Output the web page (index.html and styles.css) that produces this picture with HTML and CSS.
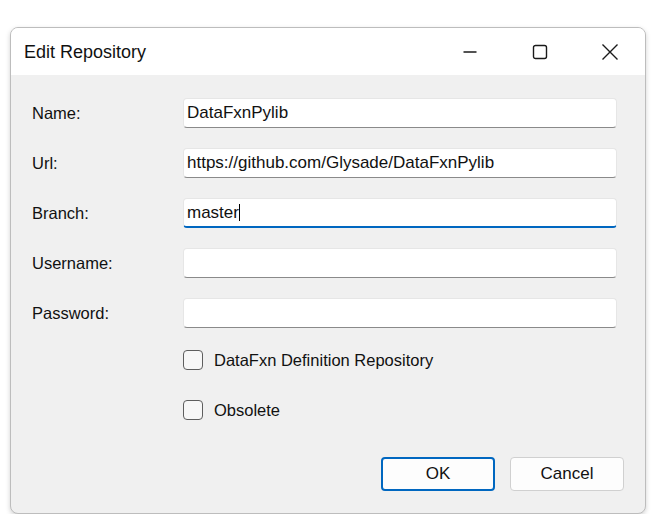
FILE: index.html
```html
<!DOCTYPE html>
<html lang="en">
	<head>
		<meta charset="UTF-8" />
		<meta name="viewport" content="width=device-width, initial-scale=1.0" />
		<title>Edit Repository</title>
		<link rel="stylesheet" href="styles.css">
	</head>
	<body>
		<div class="window">
			<div class="titlebar">
				<span class="title">Edit Repository</span>
				<div class="controls">
					<span class="ctl">
						<svg width="16" height="16" viewBox="0 0 16 16"><path d="M1.5 8h13" stroke="#1a1a1a" stroke-width="1.3" fill="none"/></svg>
					</span>
					<span class="ctl">
						<svg width="16" height="16" viewBox="0 0 16 16"><rect x="1.5" y="1.5" width="13" height="13" rx="2" stroke="#1a1a1a" stroke-width="1.4" fill="none"/></svg>
					</span>
					<span class="ctl">
						<svg width="18" height="18" viewBox="0 0 18 18"><path d="M1.5 1.5l15 15M16.5 1.5l-15 15" stroke="#1a1a1a" stroke-width="1.4" fill="none"/></svg>
					</span>
				</div>
			</div>

			<div class="content">
				<div class="form">
					<label class="lbl">Name:</label>
					<div class="field">DataFxnPylib</div>

					<label class="lbl">Url:</label>
					<div class="field">https://github.com/Glysade/DataFxnPylib</div>

					<label class="lbl">Branch:</label>
					<div class="field focused">master<span class="caret"></span></div>

					<label class="lbl">Username:</label>
					<div class="field"></div>

					<label class="lbl">Password:</label>
					<div class="field"></div>
				</div>

				<div class="checks">
					<div class="check"><span class="box"></span>DataFxn Definition Repository</div>
					<div class="check"><span class="box"></span>Obsolete</div>
				</div>

				<div class="buttons">
					<button class="btn default">OK</button>
					<button class="btn">Cancel</button>
				</div>
			</div>
		</div>
	</body>
</html>
```

FILE: styles.css
```css
body {
	margin: 0;
	background: #ffffff;
	font-family: "Liberation Sans", Arial, sans-serif;
	color: #000;
}

.window {
	margin: 27px 0 0 10px;
	width: 634px;
	height: 485px;
	border: 1px solid #bdbdbd;
	border-radius: 8px;
	overflow: hidden;
	background: #f0f0f0;
	box-shadow: 0 2px 5px rgba(0, 0, 0, 0.18);
	display: flex;
	flex-direction: column;
}

.titlebar {
	height: 47px;
	background: #ffffff;
	display: flex;
	align-items: center;
	justify-content: space-between;
	padding-left: 13px;
}

.title {
	font-size: 18px;
	color: #111;
	padding-top: 2px;
}

.controls {
	display: flex;
	height: 100%;
}

.ctl {
	width: 70px;
	display: flex;
	align-items: center;
	justify-content: center;
}

.content {
	flex: 1;
	padding: 23px 21px 0 21px;
	display: flex;
	flex-direction: column;
}

.form {
	display: grid;
	grid-template-columns: 151px 434px;
	row-gap: 20px;
	align-items: center;
}

.lbl {
	font-size: 16.5px;
	color: #111;
}

.field {
	height: 30px;
	box-sizing: border-box;
	background: #fff;
	border: 1px solid #e6e6e6;
	border-bottom: 1px solid #8a8a8a;
	border-radius: 4px;
	padding: 0 3px;
	font-size: 17px;
	line-height: 28px;
	color: #111;
	white-space: nowrap;
	overflow: hidden;
}

.field.focused {
	border-bottom: 2px solid #0067c0;
}

.caret {
	display: inline-block;
	width: 1px;
	height: 17px;
	background: #000;
	vertical-align: -3px;
}

.checks {
	margin: 22px 0 0 151px;
	display: flex;
	flex-direction: column;
	gap: 30px;
}

.check {
	display: flex;
	align-items: center;
	height: 20px;
	font-size: 16.5px;
	color: #111;
}

.box {
	width: 18px;
	height: 18px;
	border: 1px solid #5e5e5e;
	border-radius: 4px;
	background: #f7f7f7;
	margin-right: 11px;
}

.buttons {
	margin-top: 37px;
	display: flex;
	justify-content: flex-end;
	gap: 15px;
}

.btn {
	width: 114px;
	height: 34px;
	font-family: "Liberation Sans", Arial, sans-serif;
	font-size: 17px;
	color: #111;
	background: #fdfdfd;
	border: 1px solid #d0d0d0;
	border-radius: 4px;
}

.btn.default {
	border: 2px solid #0067c0;
}
```
